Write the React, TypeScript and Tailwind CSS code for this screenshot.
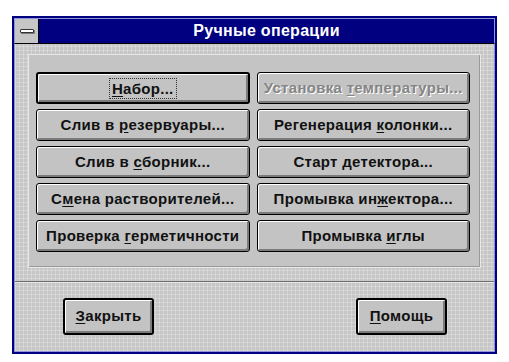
import React from "react";

type Op = {
  before: string;
  key: string;
  after: string;
  disabled?: boolean;
  focused?: boolean;
  primary?: boolean;
};

const left: Op[] = [
  { before: "", key: "Н", after: "абор...", focused: true, primary: true },
  { before: "Слив в ", key: "р", after: "езервуары..." },
  { before: "Слив в ", key: "с", after: "борник..." },
  { before: "С", key: "м", after: "ена растворителей..." },
  { before: "Проверка ", key: "г", after: "ерметичности" },
];

const right: Op[] = [
  { before: "Установка ", key: "т", after: "емпературы...", disabled: true },
  { before: "Регенерация ", key: "к", after: "олонки..." },
  { before: "Старт ", key: "д", after: "етектора..." },
  { before: "Промывка ин", key: "ж", after: "ектора..." },
  { before: "Промывка ", key: "и", after: "глы" },
];

const texture =
  "bg-[#c6c6c6] [background-image:repeating-linear-gradient(90deg,rgba(255,255,255,0.25)_0_1px,transparent_1px_4px),repeating-linear-gradient(0deg,rgba(255,255,255,0.25)_0_1px,transparent_1px_4px)]";

function Label({ op }: { op: Op }) {
  return (
    <span>
      {op.before}
      <u className="underline underline-offset-2">{op.key}</u>
      {op.after}
    </span>
  );
}

function OpButton({ op, className = "" }: { op: Op; className?: string }) {
  const border = op.primary ? "border-2" : "border";
  const text = op.disabled
    ? "text-[#858585] [text-shadow:1px_1px_0_#ffffff]"
    : "text-[#111]";
  return (
    <button
      className={`flex items-center justify-center rounded-[3px] border-black bg-[#c3c3c3] shadow-[inset_1px_1px_0_#ffffff,inset_-2px_-2px_0_#7b7b7b] text-[15px] font-bold tracking-[0.3px] ${border} ${text} ${className}`}
    >
      {op.focused ? (
        <span className="border border-dotted border-[#333] px-[2px] leading-[19px]">
          <Label op={op} />
        </span>
      ) : (
        <Label op={op} />
      )}
    </button>
  );
}

export default function App() {
  return (
    <div
      className="min-h-[362px] bg-white pl-[12px] pt-[16px]"
      style={{ fontFamily: '"Liberation Sans", Arial, sans-serif' }}
    >
      <div className="flex h-[338px] w-[485px] flex-col border-2 border-[#000080] bg-[#000080]">
        {/* title bar */}
        <div className="flex h-[26px] border border-[#8f93d8] border-b-black">
          <div className="flex w-[24px] items-center justify-center border-r border-black bg-[#c6c6c6]">
            <div className="h-[4px] w-[14px] rounded-[1px] border border-[#333] bg-white shadow-[1px_1px_0_#777]" />
          </div>
          <div className="flex flex-1 items-center justify-center text-[16px] font-bold tracking-[0.3px] text-white">
            Ручные операции
          </div>
        </div>

        {/* client area */}
        <div className={`flex flex-1 flex-col border-x border-b border-[#8f93d8] ${texture}`}>
          <div className="px-[13px] pt-[10px]">
            <div className="grid grid-cols-2 gap-x-[7px] gap-y-[5px] border border-[#e8e8e8] bg-[#c4c4c4] pt-[17px] pb-[15px] pl-[7px] pr-[10px] shadow-[inset_-1px_-1px_0_#9a9a9a]">
              {left.map((op, i) => (
                <React.Fragment key={i}>
                  <OpButton op={op} className="h-[32px]" />
                  <OpButton op={right[i]} className="h-[32px]" />
                </React.Fragment>
              ))}
            </div>
          </div>

          <div className="mt-[13px] h-[2px] border-t border-[#6e6e6e] border-b border-b-[#e6e6e6]" />

          <div className="flex justify-between pt-[15px] pl-[48px] pr-[47px]">
            <OpButton
              op={{ before: "", key: "З", after: "акрыть", primary: true }}
              className="h-[37px] w-[91px]"
            />
            <OpButton
              op={{ before: "", key: "П", after: "омощь", primary: true }}
              className="h-[37px] w-[91px]"
            />
          </div>
        </div>
      </div>
    </div>
  );
}
